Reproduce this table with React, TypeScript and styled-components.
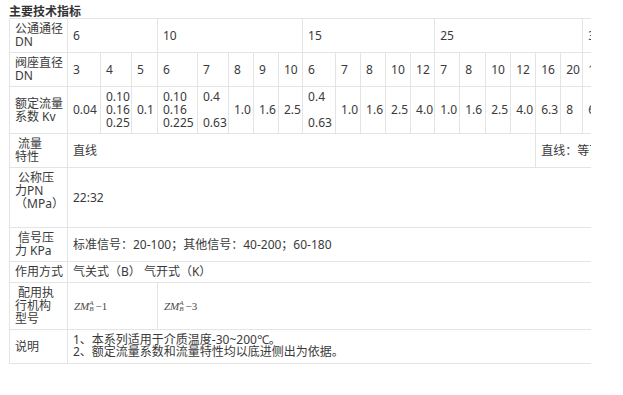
import React from "react";
import styled, { createGlobalStyle } from "styled-components";

const GlobalStyle = createGlobalStyle`
  html, body { margin: 0; padding: 0; background: #ffffff; }
  body { font-family: "Noto Sans", "Noto Sans CJK SC", sans-serif; color: #333333; }
`;

const Page = styled.div`
  padding: 3px 0 0 9px;
`;

const Title = styled.h3`
  margin: 0;
  font-size: 12px;
  line-height: 15px;
  font-weight: bold;
  color: #333333;
  font-family: "Noto Sans CJK SC", sans-serif;
`;

const Scroller = styled.div`
  width: 582px;
  overflow: hidden;
`;

const Table = styled.table<{ $w: number }>`
  border-collapse: collapse;
  table-layout: fixed;
  width: ${(p) => p.$w}px;
  font-family: "Noto Sans", "Noto Sans CJK SC", sans-serif;
  font-size: 12px;
  color: #3a3a3a;
`;

const Col = styled.col<{ $w: number }>`
  width: ${(p) => p.$w}px;
`;

const Cell = styled.td<{ $lh?: number; $h?: number }>`
  border: 1px solid #e4e4e4;
  padding: 3px 4px 4px 5px;
  line-height: ${(p) => p.$lh ?? 13}px;
  height: ${(p) => (p.$h ? `${p.$h}px` : "auto")};
  vertical-align: middle;
  white-space: nowrap;
  text-align: left;
  box-sizing: border-box;
`;

const HeadCell = styled(Cell)``;

const Formula = styled.span`
  display: inline-flex;
  align-items: center;
  font-family: "Liberation Serif", serif;
  font-size: 11px;
  color: #4a4a4a;
  padding-left: 1px;
`;

const Italic = styled.i`
  font-style: italic;
`;

const Scripts = styled.span`
  display: inline-flex;
  flex-direction: column;
  font-style: italic;
  font-size: 7px;
  line-height: 6px;
  margin: 0 2px 0 0;
`;

const colWidths = [
  58, 33, 31, 26, 40, 31, 25, 25, 24, 33, 25, 25, 25, 24, 25, 26, 25, 25, 25, 22, 25, 25, 25,
];
const tableWidth = colWidths.reduce((a, b) => a + b, 0);

const seat = ["3", "4", "5", "6", "7", "8", "9", "10", "6", "7", "8", "10", "12", "7", "8", "10", "12", "16", "20", "16", "20", "25"];

const kv: React.ReactNode[] = [
  "0.04",
  <>0.10<br />0.16<br />0.25</>,
  "0.1",
  <>0.10<br />0.16<br />0.225</>,
  <>0.4<br /><br />0.63</>,
  "1.0",
  "1.6",
  "2.5",
  <>0.4<br /><br />0.63</>,
  "1.0",
  "1.6",
  "2.5",
  "4.0",
  "1.0",
  "1.6",
  "2.5",
  "4.0",
  "6.3",
  "8",
  "6.3",
  "8",
  "10",
];

const dnGroups = [
  { dn: "6", span: 3 },
  { dn: "10", span: 5 },
  { dn: "15", span: 5 },
  { dn: "25", span: 6 },
  { dn: "32", span: 3 },
];

const ZM: React.FC<{ n: string }> = ({ n }) => (
  <Formula>
    <Italic>ZM</Italic>
    <Scripts>
      <span>A</span>
      <span>B</span>
    </Scripts>
    −{n}
  </Formula>
);

export default function App() {
  const rest = colWidths.length - 1;
  return (
    <>
      <GlobalStyle />
      <Page>
        <Title>主要技术指标</Title>
        <Scroller>
          <Table $w={tableWidth}>
            <colgroup>
              {colWidths.map((w, i) => (
                <Col key={i} $w={w} />
              ))}
            </colgroup>
            <tbody>
              <tr>
                <HeadCell>公通通径<br />DN</HeadCell>
                {dnGroups.map((g) => (
                  <Cell key={g.dn} colSpan={g.span}>{g.dn}</Cell>
                ))}
              </tr>
              <tr>
                <HeadCell>阀座直径<br />DN</HeadCell>
                {seat.map((s, i) => (
                  <Cell key={i}>{s}</Cell>
                ))}
              </tr>
              <tr>
                <HeadCell>额定流量<br />系数 Kv</HeadCell>
                {kv.map((k, i) => (
                  <Cell key={i}>{k}</Cell>
                ))}
              </tr>
              <tr>
                <HeadCell>&nbsp;流量<br />特性</HeadCell>
                <Cell colSpan={17}>直线</Cell>
                <Cell colSpan={rest - 17}>直线：等百分比</Cell>
              </tr>
              <tr>
                <HeadCell>&nbsp;公称压<br />力PN<br />（MPa）<br />&nbsp;</HeadCell>
                <Cell colSpan={rest}>22:32</Cell>
              </tr>
              <tr>
                <HeadCell>&nbsp;信号压<br />力 KPa</HeadCell>
                <Cell colSpan={rest}>标准信号：20-100；其他信号：40-200；60-180</Cell>
              </tr>
              <tr>
                <HeadCell>作用方式</HeadCell>
                <Cell colSpan={rest}>气关式（B） 气开式（K）</Cell>
              </tr>
              <tr>
                <HeadCell>&nbsp;配用执<br />行机构<br />型号</HeadCell>
                <Cell colSpan={3}><ZM n="1" /></Cell>
                <Cell colSpan={rest - 3}><ZM n="3" /></Cell>
              </tr>
              <tr>
                <HeadCell $h={34}>说明</HeadCell>
                <Cell colSpan={rest} $lh={12} $h={34}>
                  1、本系列适用于介质温度-30~200℃。<br />
                  2、额定流量系数和流量特性均以底进侧出为依据。
                </Cell>
              </tr>
            </tbody>
          </Table>
        </Scroller>
      </Page>
    </>
  );
}
